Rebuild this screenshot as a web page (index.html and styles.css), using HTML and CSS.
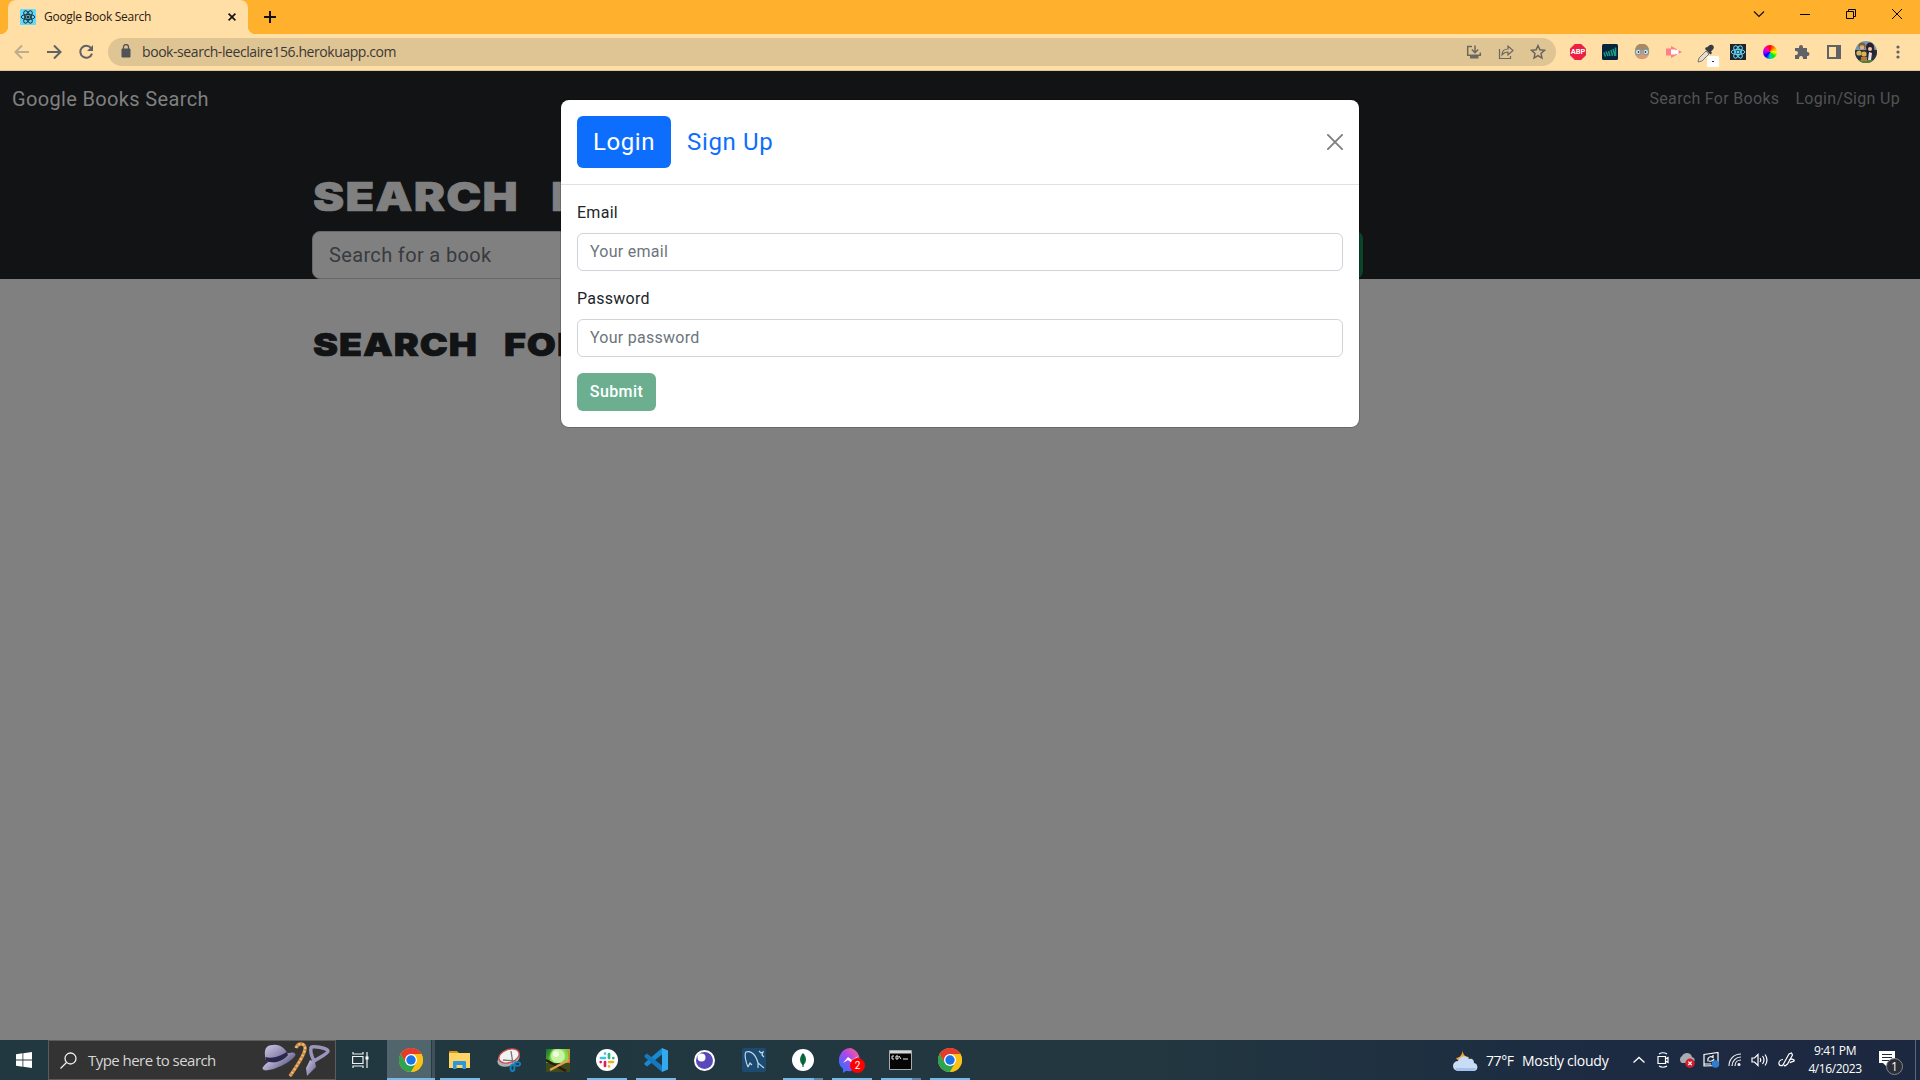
FILE: index.html
```html
<!DOCTYPE html>
<html lang="en">
<head>
<meta charset="utf-8">
<title>Google Book Search</title>
<link rel="stylesheet" href="styles.css">
</head>
<body>
<svg width="0" height="0" class="defs" aria-hidden="true">
  <symbol id="react" viewBox="0 0 16 16"><g fill="none" stroke="currentColor" stroke-width="1"><ellipse cx="8" cy="8" rx="6.8" ry="2.6"/><ellipse cx="8" cy="8" rx="6.8" ry="2.6" transform="rotate(60 8 8)"/><ellipse cx="8" cy="8" rx="6.8" ry="2.6" transform="rotate(120 8 8)"/></g><circle cx="8" cy="8" r="1.5" fill="currentColor"/></symbol>
  <symbol id="chrome" viewBox="0 0 24 24"><circle cx="12" cy="12" r="12" fill="#fbc116"/><path d="M12 6H22.4A12 12 0 0 0 1.600 6L6.800 15Z" fill="#e33b2e"/><path d="M1.600 6A12 12 0 0 0 12 24L17.200 15 12 12 6.800 15Z" fill="#2da44e"/><path d="M12 6H22.400A12 12 0 0 1 12 24L17.200 15Z" fill="#fbc116"/><circle cx="12" cy="12" r="6" fill="#fff"/><circle cx="12" cy="12" r="4.700" fill="#1a73e8"/></symbol>
</svg>

<header class="tabs">
  <div class="tab">
    <svg class="favicon" width="16" height="16"><use href="#react"/></svg>
    <span class="tab-title">Google Book Search</span>
    <svg class="tab-close" width="8" height="8" viewBox="0 0 8 8"><path d="M.6.6 7.400 7.400M7.400.6.6 7.400" stroke="#111" stroke-width="1.600"/></svg>
  </div>
  <svg class="plus" width="12" height="12" viewBox="0 0 12 12"><path d="M6 0V12M0 6H12" stroke="#111" stroke-width="2"/></svg>
  <div class="window-controls">
    <span><svg width="12" height="12" viewBox="0 0 12 12"><path d="m1 3.500 5 5 5-5" fill="none" stroke="#111" stroke-width="1.200"/></svg></span>
    <span><svg width="10" height="10" viewBox="0 0 10 10"><path d="M0 5.500H10" stroke="#000"/></svg></span>
    <span><svg width="10" height="10" viewBox="0 0 10 10"><path d="M.5 2.500h7v7h-7zM2.500 2V.5h7v7H8" fill="none" stroke="#000"/></svg></span>
    <span><svg width="10" height="10" viewBox="0 0 10 10"><path d="m0 0 10 10M10 0 0 10" stroke="#000"/></svg></span>
  </div>
</header>

<div class="toolbar">
  <span class="cell faded"><svg width="16" height="16" viewBox="0 0 16 16"><path d="M15 8H2M8 1.500 1.500 8 8 14.500" fill="none" stroke="#5f6368" stroke-width="2"/></svg></span>
  <span class="cell"><svg width="16" height="16" viewBox="0 0 16 16"><path d="M1 8h13M8 1.500 14.500 8 8 14.500" fill="none" stroke="#5f6368" stroke-width="2"/></svg></span>
  <span class="cell"><svg width="16" height="16" viewBox="0 0 16 16"><path d="M13 4A6 6 0 1 0 14 9.600" fill="none" stroke="#5f6368" stroke-width="2"/><path d="M15 1v6H9z" fill="#5f6368"/></svg></span>
  <div class="address">
    <svg class="lock" width="10" height="14" viewBox="0 0 10 14"><path d="M1 5h8v8H1z" fill="#505358" stroke="#505358" stroke-linejoin="round"/><path d="M2.500 5V3a2.500 2.500 0 0 1 5 0v2" fill="none" stroke="#505358" stroke-width="1.300"/></svg>
    <span class="url">book-search-leeclaire156.herokuapp.com</span>
    <span class="cell"><svg width="16" height="16" viewBox="0 0 16 16"><path d="M6 2.500H1.700v8.800h12.600V8.500M9 1.500v7M5.800 5.500 9 8.700l3.200-3.200" fill="none" stroke="#6b6860" stroke-width="1.500"/><path d="M4 12h8.500v2.500H4z" fill="#6b6860"/></svg></span>
    <span class="cell"><svg width="16" height="16" viewBox="0 0 16 16"><path d="M1.500 5v9.500h11V12M4 11c0-4 2.500-6 6-6V2l5 4.500-5 4.500V8C7 8 5.500 9 4 11z" fill="none" stroke="#6b6860" stroke-width="1.200"/></svg></span>
    <span class="cell"><svg width="16" height="16" viewBox="0 0 16 16"><path d="m8 1.600 1.900 4.200 4.600.5-3.500 3.100 1 4.600-4-2.400-4 2.400 1-4.600L1.500 6.300l4.600-.5z" fill="none" stroke="#65635e" stroke-width="1.400"/></svg></span>
  </div>
  <div class="extensions">
    <span class="cell"><span class="abp">ABP</span></span>
    <span class="cell"><svg width="16" height="16" viewBox="0 0 16 16"><rect width="16" height="16" rx="1.500" fill="#07243b"/><path d="m2 8.500 1.500 4M4 7.500l2 4.500M6.500 7l1.500 5M9 6l1.500 6M11 5l2 7M13.500 3.500v8.500" stroke="#1c9d86" stroke-width="1.500"/></svg></span>
    <span class="cell"><svg width="16" height="16" viewBox="0 0 16 16"><circle cx="8" cy="8" r="7.300" fill="#d99a78"/><path d="M1 6.500a7 7 0 0 1 14 0z" fill="#a58a64"/><g fill="#e8f4f4" stroke="#7c9da3" stroke-width="1.200"><circle cx="4.200" cy="8" r="2.700"/><circle cx="11.800" cy="8" r="2.700"/></g><circle cx="4.500" cy="8" r=".9" fill="#333"/><circle cx="11.500" cy="8" r=".9" fill="#333"/></svg></span>
    <span class="cell"><svg width="16" height="16" viewBox="0 0 16 16"><path d="M0 4.500h5V2l11 6-11 6v-2.500H0z" fill="#ff8087"/><path d="M5 5.500h4.500v1L12.500 5v6L9.500 9.500v1H5z" fill="#fff"/></svg></span>
    <span class="cell"><svg class="dropper" width="22" height="24" viewBox="0 0 22 24"><path d="m1 19 1-4 7-7 3 3-7 7z" fill="#e4ded2" stroke="#80776b"/><path d="m8 6 5.500 5.500L15 10l-1-1.500 2-2c2.500-3-1-6-4-4L10 4.500l-1-.5z" fill="#383b42"/><rect x="10" y="13" width="12" height="12" rx="1.500" fill="#fff"/><path d="M15 18.500h2" stroke="#333"/></svg></span>
    <span class="cell"><svg class="react-dark" width="16" height="16"><use href="#react"/></svg></span>
    <span class="cell"><span class="wheel"></span></span>
    <span class="cell"><svg width="16" height="16" viewBox="0 0 16 16"><path d="M1 4h4V3a2 2 0 0 1 4 0v1h4v4h.5a2 2 0 0 1 0 4H13v3H9v-1a2 2 0 0 0-4 0v1H1v-4h1a2 2 0 0 0 0-4H1z" fill="#5f6368"/></svg></span>
    <span class="cell"><svg width="14" height="14" viewBox="0 0 14 14"><path d="M1 1h12v12H1z" fill="none" stroke="#5f6368" stroke-width="2"/><path d="M9 0h5v14H9z" fill="#5f6368"/></svg></span>
    <span class="cell"><svg width="22" height="22" viewBox="0 0 22 22"><clipPath id="av"><circle cx="11" cy="11" r="11"/></clipPath><g clip-path="url(#av)"><path d="M0 0h22v22H0z" fill="#7299b8"/><path d="M0 9h22v13H0z" fill="#27333c"/><path d="M2 19h19v3H2z" fill="#57813b"/><circle cx="7" cy="5" r="3.500" fill="#7d6236"/><circle cx="7" cy="6.500" r="2.300" fill="#deb17c"/><path d="M11 6c0-6 8-6 8 0l1 8-4-1-4 1z" fill="#2e2028"/><circle cx="15" cy="8" r="2" fill="#f0c7a8"/><circle cx="4" cy="12" r="2.600" fill="#d7b05a"/><circle cx="9" cy="13" r="2.600" fill="#e1b04e"/><path d="m14 11 3 1-1 7h-3z" fill="#e4e1e5"/><path d="M6 16h6v4H6z" fill="#b77738"/></g></svg></span>
    <span class="cell"><svg width="4" height="16" viewBox="0 0 4 16" fill="#5f6368"><circle cx="2" cy="3" r="1.600"/><circle cx="2" cy="8" r="1.600"/><circle cx="2" cy="13" r="1.600"/></svg></span>
  </div>
</div>

<main class="page">
  <section class="dark">
    <nav class="navbar">
      <span class="brand">Google Books Search</span>
      <a class="nav-books">Search For Books</a>
      <a class="nav-login">Login/Sign Up</a>
    </nav>
    <div class="container">
      <h1 class="mono-title"><span>SEARCH</span><span>FOR</span></h1>
      <div class="search-row"><div class="search-input">Search for a book</div><div class="search-button"></div></div>
    </div>
  </section>
  <section class="container results">
    <h2 class="mono-title small"><span>SEARCH</span><span>FOR</span></h2>
  </section>

  <div class="modal">
    <div class="modal-header">
      <span class="pill">Login</span>
      <span class="signup">Sign Up</span>
      <svg class="modal-close" width="16" height="16" viewBox="0 0 16 16"><path d="m.9.900 14.200 14.200M15.100.900.900 15.100" stroke="#7f7f7f" stroke-width="1.900" stroke-linecap="round"/></svg>
    </div>
    <form class="modal-body">
      <label class="l-email">Email</label>
      <div class="field f-email">Your email</div>
      <label class="l-password">Password</label>
      <div class="field f-password">Your password</div>
      <div class="submit">Submit</div>
    </form>
  </div>
</main>

<footer class="taskbar">
  <div class="start"><svg width="16" height="16" viewBox="0 0 16 16" fill="#fff"><path d="M0 2.200 6.500 1.300V7.600H0zM7.300 1.200 16 0v7.600H7.300zM0 8.400h6.500v6.300L0 13.800zM7.300 8.400H16V16l-8.700-1.200z"/></svg></div>
  <div class="task-search">
    <svg width="17" height="17" viewBox="0 0 17 17"><circle cx="10.500" cy="6.500" r="5.500" fill="none" stroke="#eee" stroke-width="1.300"/><path d="M6.500 10.500.5 16.500" stroke="#eee" stroke-width="1.300"/></svg>
    <span class="hint">Type here to search</span>
    <svg class="hat" width="68" height="36" viewBox="0 0 68 36"><defs><linearGradient id="lav" x2="1" y2="1"><stop stop-color="#cdc7e6"/><stop offset="1" stop-color="#625d87"/></linearGradient></defs><ellipse cx="17" cy="19.500" rx="18" ry="5" transform="rotate(-25 17 19.500)" fill="url(#lav)"/><path d="M4 19C1 7 4 3 11 3c7-1 13 4 15 10-6 7-15 9-22 6z" fill="url(#lav)"/><path d="M3.500 15c7 2 15-1 21-5l1.500 3c-6 7-15 9-22 6z" fill="#29284c"/><path d="M34 6c2-6 10-5 9 1-.5 5-8 17-15 27" fill="none" stroke="#c88945" stroke-width="3.400"/><path d="M34 6c2-6 10-5 9 1-.5 5-8 17-15 27" fill="none" stroke="#f0bd78" stroke-width="2.200" stroke-dasharray="2 2"/><path d="M49 6c0-3 17 0 17 3s-10 7-14 10c-2-4-4-9-3-13z" fill="none" stroke="#9995bd" stroke-width="3.500"/><path d="m48 18 5 2 1 5-9 9-1-8z" fill="url(#lav)"/></svg>
  </div>
  <div class="task-view"><svg width="17" height="16" viewBox="0 0 17 16" fill="none" stroke="#f0f0f0" stroke-width="1.200"><path d="M.6 4.500h10.400v7H.6zM1 0v2h10V0M1 16v-2h10v2M15 0v16"/><path d="M13.500 4.500h3v3h-3z" fill="#fff" stroke="none"/></svg></div>
  <div class="apps">
    <div class="app active"><svg width="24" height="24"><use href="#chrome"/></svg></div>
    <div class="app open"><svg width="22" height="18" viewBox="0 0 22 18"><path d="M0 1Q0 0 1 0h7l2 2H0z" fill="#d99513"/><path d="M0 2h21v15H0z" fill="#ffd466"/><path d="M4 18v-7q0-1 1-1h11q1 0 1 1v7h-3.500v-4h-6v4z" fill="#2997e2"/></svg></div>
    <div class="app"><svg width="24" height="24" viewBox="0 0 24 24"><ellipse cx="11.500" cy="11" rx="11.500" ry="7" transform="rotate(-20 11.500 11)" fill="#aab2b8"/><ellipse cx="12" cy="8" rx="10.500" ry="6.500" transform="rotate(-20 12 8)" fill="#f1f3f3" stroke="#d94a4d" stroke-width="1.300"/><path d="m14 3 2 13M6 12l13 1" stroke="#777" stroke-width="1.300"/><g fill="none" stroke="#1580bd" stroke-width="1.800"><ellipse cx="15.500" cy="20" rx="2" ry="3"/><ellipse cx="20.500" cy="16" rx="2.800" ry="1.800"/></g></svg></div>
    <div class="app"><svg width="24" height="24" viewBox="0 0 24 24"><defs><linearGradient id="pt" x2="1" y2=".7"><stop stop-color="#12702c"/><stop offset=".5" stop-color="#7fd13e"/><stop offset="1" stop-color="#f2561f"/></linearGradient><clipPath id="ptc"><path d="M0 1h24v23H0z"/></clipPath></defs><g clip-path="url(#ptc)"><path d="M0 1h24v23H0z" fill="url(#pt)"/><circle cx="13" cy="9" r="9.500" fill="#7fdc50"/><circle cx="12" cy="8" r="7" fill="#c9f2a4"/><circle cx="10" cy="6" r="3" fill="#eefbe0"/><path d="M0 15h24v9H0z" fill="#3c4a1c"/><path d="m0 12 20 11" stroke="#2c1a10" stroke-width="2.500"/><path d="m4 22 19-10" stroke="#e0a050" stroke-width="2.200"/></g></svg></div>
    <div class="app open"><svg width="22" height="22" viewBox="0 0 22 22"><circle cx="11" cy="11" r="11" fill="#fff"/><g stroke-width="2.700" stroke-linecap="round"><path d="M9 4.500v.1M5 9h4" stroke="#36c5f0"/><path d="M13 5v4M17.300 9v.1" stroke="#2eb67d"/><path d="M13 13h4M13 17.300v.1" stroke="#ecb22e"/><path d="M9 13v4M4.700 13v.1" stroke="#e01e5a"/></g></svg></div>
    <div class="app open"><svg width="24" height="24" viewBox="0 0 24 24"><path d="m18 0 6 2.500v19L18 24z" fill="#35a9ef"/><path d="M18 0v6.500L3 18.500.5 16.500v-1.500z" fill="#168bd2"/><path d="M18 24v-6.500L3 5.500.5 7.500V9z" fill="#1479bd"/></svg></div>
    <div class="app"><svg width="21" height="21" viewBox="0 0 21 21"><circle cx="10.500" cy="10.500" r="10.500" fill="#fff"/><circle cx="10.500" cy="10.500" r="8.500" fill="#5a49bb"/><circle cx="7.500" cy="7.500" r="4" fill="#fff"/></svg></div>
    <div class="app"><svg width="24" height="24" viewBox="0 0 24 24"><rect width="24" height="24" rx="2" fill="#1c4a70"/><path d="M6 19C4 15 2 6 4 4c5-2 10 3 12 11l6 5M16 15v5M6 19l2-4 2 2M17 3l2 2 2-1-1 3 2 2" fill="none" stroke="#c0d8e9" stroke-width="1.200"/></svg></div>
    <div class="app open stacked"><svg width="22" height="22" viewBox="0 0 22 22"><circle cx="11" cy="11" r="11" fill="#fff"/><path d="M11 4c4 4 4 9 0 12.500C7 13 7 8 11 4z" fill="#087345"/><path d="M11 5v13" stroke="#034b35"/></svg></div>
    <div class="app open"><svg width="25" height="25" viewBox="0 0 25 25"><defs><linearGradient id="ms" x1="1" x2="0" y2="1"><stop stop-color="#ff6978"/><stop offset=".45" stop-color="#b144ee"/><stop offset="1" stop-color="#087dff"/></linearGradient></defs><path d="M12 0a12 12 0 0 1 0 23c-2 .5-4 0-5 0l-3 2v-4A12 12 0 0 1 12 0z" fill="url(#ms)"/><path d="m4 15 5-6 4 3 6-4-6 7-4-3z" fill="#fff"/></svg><span class="badge">2</span></div>
    <div class="app open stacked"><svg width="23" height="20" viewBox="0 0 23 20"><path d="M.5.500h22v19H.500z" fill="#050505" stroke="#aaa"/><path d="M1 1h21v2.500H1z" fill="#d4d8dc"/><path d="M5 6H3v3h2M7 6v3h2V6zM10 6l2 3M14 9h5" fill="none" stroke="#eee"/></svg></div>
    <div class="app open"><svg width="24" height="24"><use href="#chrome"/></svg></div>
  </div>
  <div class="weather">
    <svg width="25" height="24" viewBox="0 0 25 24"><path d="M10 0c-1 5 1 9 6 9-2 5-10 6-13 1 4 0 7-4 7-10z" fill="#f3a72d"/><path d="M5 23a5 5 0 0 1 0-10c2-6 9-6 11-2 4-1 5 2 5 4 4 0 5 8 0 8z" fill="#c9dcf6"/><path d="M2 20h21q-1 3-4 3H5q-2 0-3-3z" fill="#a3c1ec"/></svg>
    <span class="temp">77°F</span><span class="sky">Mostly cloudy</span>
  </div>
  <div class="tray">
    <span><svg width="12" height="8" viewBox="0 0 12 8"><path d="m.5 6.500 5.500-5 5.500 5" fill="none" stroke="#fff" stroke-width="1.300"/></svg></span>
    <span><svg width="12" height="16" viewBox="0 0 12 16" fill="none" stroke="#fff" stroke-width="1.200"><path d="M1 4.500h7.500v7H1zM8.500 7l2.500-1.500v5L8.500 9M2 2q4-2.500 8 0M2 14q4 2.500 8 0"/></svg></span>
    <span class="cloud"><svg width="17" height="16" viewBox="0 0 17 16"><path d="M4 11a4 4 0 0 1 0-7c2-4 9-4 10 1 4 1 3 6 0 6z" fill="#a7adb1"/><circle cx="12" cy="11.300" r="4.700" fill="#d71c2b"/><path d="m10.300 9.600 3.400 3.400m0-3.400-3.400 3.400" stroke="#fff" stroke-width="1.200"/></svg></span>
    <span><svg width="17" height="16" viewBox="0 0 17 16"><path d="M1 2.500 15 .5v13L1 14zM1 12h7M5 9.500V6.500q2-3 5-1V3M11 7q-1 3-5 2" fill="none" stroke="#fff" stroke-width="1.200"/><circle cx="12.500" cy="12" r="3.800" fill="#2f7ed0"/></svg></span>
    <span><svg width="14" height="14" viewBox="0 0 14 14" fill="none" stroke="#eee" stroke-width="1.200"><path d="M1 13C1 6 6 1 13 1M4 13c0-5 4-9 9-9M7 13c0-4 3-6 6-6"/><circle cx="11" cy="11.500" r="1" fill="#fff"/></svg></span>
    <span><svg width="17" height="14" viewBox="0 0 17 14" fill="none" stroke="#fff" stroke-width="1.200"><path d="M1 5h2.500L7 1.500v11L3.500 9H1zM9 5q1.500 2 0 4M11.500 3q3 4 0 8M14 1.500q4 5.500 0 11"/></svg></span>
    <span class="pen"><svg width="17" height="16" viewBox="0 0 17 16" fill="none" stroke="#fff" stroke-width="1.200"><path d="M5 7.500c-3 0-4.500 2.500-4 4.500s3 2 4 1l1-2 5-9 2.500-1 1 2-5 9-2.500 2-1-1M11 8c3-2 6 0 5 1s-3 0-4 2"/></svg></span>
    <div class="clock"><span class="time">9:41 PM</span><span class="date">4/16/2023</span></div>
    <div class="notes"><svg width="25" height="25" viewBox="0 0 25 25"><path d="M0 0h16v12H8v4l-4-4H0z" fill="#fff"/><path d="M3 3.500h10M3 6.500h10M3 9.500h7" stroke="#1c2a42"/><circle cx="15.500" cy="15.500" r="8" fill="#2b2e36" stroke="#85878c"/></svg><span class="count">1</span></div>
  </div>
</footer>
</body>
</html>
```
FILE: styles.css
```css
* { box-sizing: border-box; }
body { margin: 0; width: 1920px; height: 1080px; overflow: hidden; display: flex; flex-direction: column; font-family: "Open Sans", "Noto Sans", sans-serif; }
svg { display: block; flex: none; }
span, a, label, .field, .search-input { white-space: nowrap; }
.defs { position: absolute; }

/* browser chrome */
.tabs { height: 34px; flex: none; background: #ffb02c; display: flex; align-items: flex-start; padding-left: 8px; }
.tab { position: relative; width: 240px; height: 34px; border-radius: 8px 8px 0 0; background: #ffdfa5; display: flex; align-items: center; padding: 0 12px; }
.tab::before, .tab::after { content: ""; position: absolute; bottom: 0; width: 8px; height: 8px; }
.tab::before { left: -8px; background: radial-gradient(circle at 0 0, transparent 8px, #ffdfa5 8.500px); }
.tab::after { right: -8px; background: radial-gradient(circle at 100% 0, transparent 8px, #ffdfa5 8.500px); }
.favicon { background: #61dafb; color: #20323a; border-radius: 1px; }
.tab-title { margin-left: 8px; padding-bottom: 1px; font-size: 12px; letter-spacing: -.28px; color: #2b2015; flex: 1; }
.plus { margin: 11px 0 0 16px; }
.window-controls { margin-left: auto; display: flex; height: 28px; }
.window-controls span { width: 46px; display: flex; align-items: center; justify-content: center; }
.toolbar { height: 37px; flex: none; background: #ffdfa5; border-bottom: 1px solid #dcc59b; display: flex; align-items: center; padding: 0 6px; }
.cell { width: 32px; height: 32px; flex: none; display: flex; align-items: center; justify-content: center; }
.faded { opacity: .4; }
.address { flex: 1; height: 28px; margin: 0 6px; border-radius: 14px; background: #dfc494; display: flex; align-items: center; padding: 0 2px 0 13px; }
.lock { margin-bottom: 2px; }
.url { flex: 1; margin-left: 11px; padding-bottom: 1px; font-size: 14px; letter-spacing: -.43px; color: #3b3834; }
.extensions { display: flex; }
.abp { width: 16px; height: 16px; background: #ed1f43; clip-path: polygon(30% 0, 70% 0, 100% 30%, 100% 70%, 70% 100%, 30% 100%, 0 70%, 0 30%); color: #fff; font: 700 7.500px/16px Roboto, sans-serif; text-align: center; }
.dropper { margin: 5px 0 0 4px; }
.react-dark { background: #20232a; color: #61dafb; }
.wheel { width: 14px; height: 14px; border-radius: 50%; background: conic-gradient(#f00, #f80, #ff0, #0e0, #0cc, #00f, #a0f, #f0a, #f00); }

/* page */
.page { flex: 1; position: relative; background: #808080; font-family: Roboto, "Open Sans", sans-serif; }
.dark { height: 208px; background: #111315; }
.navbar { height: 56px; display: flex; align-items: center; padding: 0 20px 0 12px; }
.brand { flex: 1; font-size: 20px; letter-spacing: .35px; color: #808080; }
.navbar a { font-size: 16px; color: #515354; letter-spacing: .31px; padding-bottom: 1px; }
.nav-books { margin-right: 16px; }
.container { width: 1051px; margin-left: 312px; }
.mono-title { margin: 0; display: flex; padding-left: 1px; font: 900 40px/48px Inter, sans-serif; color: #808080; }
.dark .mono-title { padding-top: 46px; }
.mono-title span { display: block; width: 210px; margin-right: 28px; letter-spacing: 1px; -webkit-text-stroke: .7px currentColor; transform: scaleX(1.173); transform-origin: 0 0; }
.search-row { display: flex; height: 48px; margin-top: 10px; }
.search-input { width: 700px; height: 48px; background: #808080; border: 1px solid #676a6d; border-radius: 8px; padding: 0 16px; font-size: 20px; line-height: 46px; letter-spacing: .35px; color: #383b3e; }
.search-button { flex: 1; margin-left: 24px; background: #0c442a; border-radius: 8px; }
.results { padding-top: 47px; }
.mono-title.small { font-size: 32px; line-height: 38px; color: #111315; }
.mono-title.small span { width: 168px; margin-right: 23px; letter-spacing: .8px; }

/* modal dialog */
.modal { position: absolute; left: 561px; top: 29px; width: 798px; height: 327px; background: #fff; border-radius: 8px; box-shadow: 0 0 0 1px rgba(0,0,0,.18); color: #212529; }
.modal-header { height: 85px; border-bottom: 1px solid #dee2e6; display: flex; align-items: center; padding: 0 16px; font-size: 24px; }
.pill { width: 94px; height: 52px; line-height: 52px; border-radius: 6px; background: #0d6efd; color: #fff; text-align: center; letter-spacing: .6px; }
.signup { margin-left: 16px; color: #0d6efd; flex: 1; letter-spacing: .65px; }
.modal-body { margin: 0; padding: 16px; display: flex; flex-direction: column; font-size: 16px; line-height: 24px; letter-spacing: .27px; align-items: flex-start; }
.field { width: 766px; height: 38px; margin: 8px 0 16px; padding: 0 12px; border: 1px solid #ced4da; border-radius: 6px; line-height: 36px; color: #6c757d; }
.submit { width: 79px; height: 38px; background: #6baf90; border-radius: 6px; color: #fff; text-align: center; line-height: 38px; font-weight: 500; letter-spacing: .4px; }

/* taskbar */
.taskbar { height: 40px; flex: none; background: linear-gradient(90deg, #213841, #223740 60%, #1c2a42 85%, #1c2840); display: flex; color: #fff; }
.start, .task-view { width: 48px; display: flex; align-items: center; justify-content: center; }
.task-search { width: 288px; border: 1px solid #5c5c5c; background: #333; display: flex; align-items: center; padding: 0 5px 0 11px; }
.hint { margin-left: 11px; flex: 1; font-size: 15px; letter-spacing: -.54px; color: #d6d6d6; }
.apps { display: flex; margin-left: 3px; }
.app { position: relative; width: 49px; height: 40px; display: flex; align-items: center; justify-content: center; padding-right: 2px; }
.app.active { background: linear-gradient(90deg, #50656c 44px, #263b44 44px, #263b44 45px, #405159 45px, #405159 48px, transparent 48px); }
.app.active::after, .app.open::after { content: ""; position: absolute; bottom: 0; height: 2px; background: #76b9ed; }
.app.active::after { left: 0; width: 48px; }
.app.open::after { left: 4px; width: 40px; }
.app.stacked::after { background: linear-gradient(90deg, #76b9ed 31px, #5786ab 31px); }
.badge { position: absolute; left: 22px; top: 18px; width: 15px; height: 15px; border-radius: 50%; background: #f00; font: 10px/15px Roboto, sans-serif; text-align: center; }
.weather { margin-left: auto; display: flex; align-items: center; font-size: 14px; width: 174px; }
.temp { margin-left: 8px; width: 36px; letter-spacing: -.4px; }
.sky { letter-spacing: -.25px; }
.tray { display: flex; align-items: center; width: 293px; }
.tray > span { width: 24px; display: flex; justify-content: center; }
.tray > .cloud { padding-right: 2px; }
.tray > .pen { width: 32px; padding-right: 1px; }
.clock { width: 64px; display: flex; flex-direction: column; align-items: center; font-size: 12px; line-height: 18px; letter-spacing: -.4px; }
.notes { position: relative; margin-left: 12px; padding-top: 4px; height: 27px; width: 37px; }
.notes::after { content: ""; position: absolute; left: 36px; top: -7px; width: 1px; height: 40px; background: #5b6678; }
.count { position: absolute; left: 12px; top: 12px; font-size: 12px; line-height: 16px; }
```
